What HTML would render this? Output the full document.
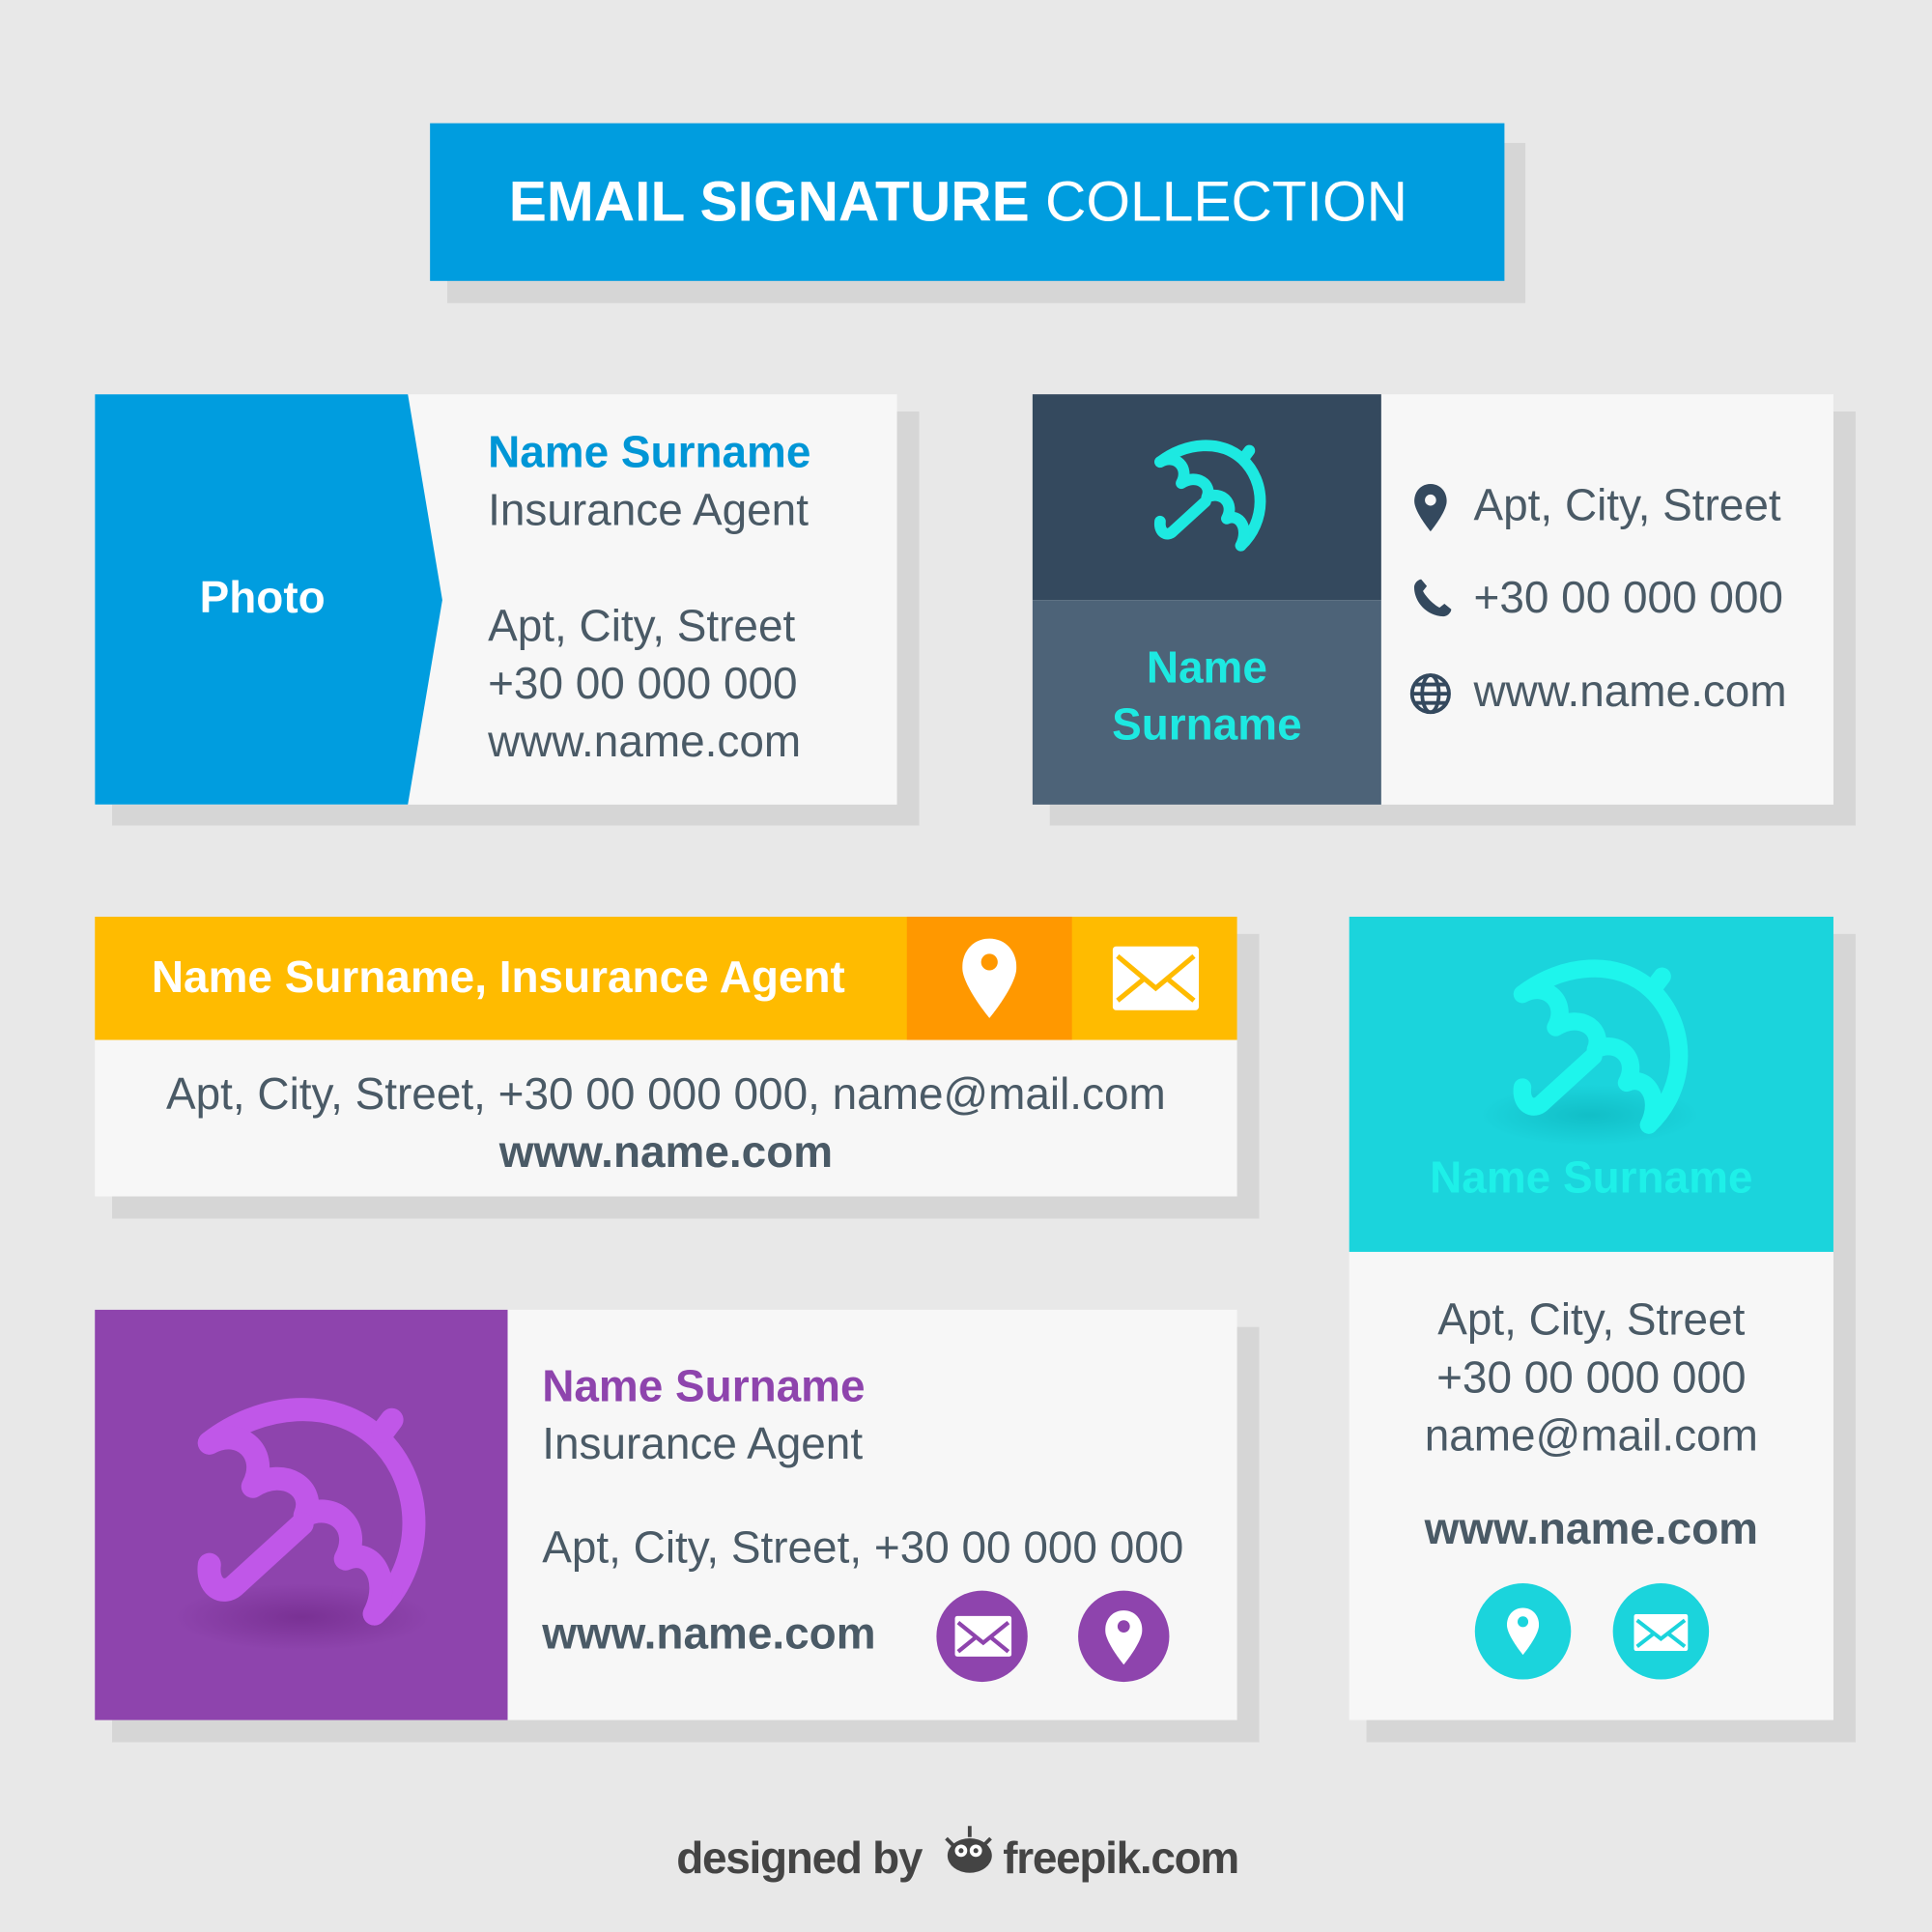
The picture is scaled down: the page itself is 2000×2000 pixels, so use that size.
<!DOCTYPE html>
<html><head><meta charset="utf-8"><style>
html,body{margin:0;padding:0;background:#e8e8e8;width:2000px;height:2000px;overflow:hidden}
#w{position:absolute;left:0;top:0;width:1568px;height:1568px;transform:scale(1.27551);transform-origin:0 0;font-family:"Liberation Sans",sans-serif;color:#4a5a66}
.a{position:absolute}
.sh{position:absolute;background:#d6d6d6}
.t{position:absolute;font-size:36px;white-space:nowrap;line-height:1}
.b{font-weight:bold}
</style></head><body><div id="w">
<svg width="0" height="0" style="position:absolute"><defs>
<symbol id="umb" viewBox="0 0 100 100"><g fill="none" stroke-width="8" stroke-linecap="round" stroke-linejoin="round">
<path d="M17,26 C35,12 60,10 75,24 C92,40 92,68 74,85"/>
<path d="M17,26 C28,20 38,30 32,41 C43,34 54,42 50,51 C60,46 70,55 64,66 C73,62 80,73 74,85"/>
<path d="M77,22 L80,18"/>
<path d="M49,54 L26,75 C22,79 16,76 17,68"/></g></symbol>
</defs></svg>

<!-- title -->
<div class="sh" style="left:363px;top:116px;width:875px;height:130px"></div>
<div class="a" style="left:349px;top:100px;width:872px;height:128px;background:#009ddf"></div>
<div class="t" style="left:413px;top:140px;font-size:46px;color:#fff"><b>EMAIL SIGNATURE</b> COLLECTION</div>

<!-- card1 -->
<div class="sh" style="left:91px;top:334px;width:655px;height:336px"></div>
<div class="a" style="left:77px;top:320px;width:651px;height:333px;background:#f7f7f7"></div>
<svg class="a" style="left:77px;top:320px" width="290" height="333"><polygon points="0,0 254,0 282,167 254,333 0,333" fill="#009ddf"/></svg>
<div class="t b" style="left:77px;top:467px;width:272px;text-align:center;color:#fff">Photo</div>
<div class="t b" style="left:396px;top:349px;color:#0096d6">Name Surname</div>
<div class="t" style="left:396px;top:396px">Insurance Agent</div>
<div class="t" style="left:396px;top:490px">Apt, City, Street</div>
<div class="t" style="left:396px;top:537px">+30 00 000 000</div>
<div class="t" style="left:396px;top:584px">www.name.com</div>

<!-- card2 -->
<div class="sh" style="left:852px;top:334px;width:654px;height:336px"></div>
<div class="a" style="left:838px;top:320px;width:650px;height:333px;background:#f7f7f7"></div>
<div class="a" style="left:838px;top:320px;width:283px;height:167px;background:#34495e"></div>
<div class="a" style="left:838px;top:487px;width:283px;height:166px;background:#4d6378"></div>
<svg class="a" style="left:922px;top:345px" width="115" height="115" stroke="#1de9e1"><use href="#umb"/></svg>
<div class="t b" style="left:838px;top:524px;width:283px;text-align:center;color:#1de9e1">Name</div>
<div class="t b" style="left:838px;top:570px;width:283px;text-align:center;color:#1de9e1">Surname</div>
<svg class="a" style="left:1147px;top:392px" width="28" height="40" viewBox="4 1 16 22"><path fill="#34495e" d="M12,1 C7.5,1 4.5,4.5 4.5,9 C4.5,14 12,23 12,23 C12,23 19.5,14 19.5,9 C19.5,4.5 16.5,1 12,1Z"/><circle cx="12" cy="8.5" r="2.6" fill="#f7f7f7"/></svg>
<svg class="a" style="left:1143px;top:466px" width="38" height="40" viewBox="0 0 24 24"><path fill="#34495e" d="M6.6,2 C5,2 3,4 3,6 C3,14 10,21 18,21 C20,21 22,19 22,17.4 L18.5,14.5 L16,16.5 C13,15 9,11 7.5,8 L9.5,5.5 Z"/></svg>
<svg class="a" style="left:1143px;top:545px" width="36" height="36" viewBox="0 0 24 24" fill="none" stroke="#34495e" stroke-width="2"><circle cx="12" cy="12" r="10"/><ellipse cx="12" cy="12" rx="4.5" ry="10"/><path d="M2,12H22M4,7H20M4,17H20"/></svg>
<div class="t" style="left:1196px;top:392px">Apt, City, Street</div>
<div class="t" style="left:1196px;top:467px">+30 00 000 000</div>
<div class="t" style="left:1196px;top:543px">www.name.com</div>

<!-- card3 -->
<div class="sh" style="left:91px;top:758px;width:931px;height:231px"></div>
<div class="a" style="left:77px;top:744px;width:927px;height:227px;background:#f7f7f7"></div>
<div class="a" style="left:77px;top:744px;width:927px;height:100px;background:#ffbb00"></div>
<div class="a" style="left:736px;top:744px;width:134px;height:100px;background:#ff9800"></div>
<div class="t b" style="left:123px;top:775px;color:#fff">Name Surname, Insurance Agent</div>
<svg class="a" style="left:781px;top:759px" width="44" height="70" viewBox="4.5 1 15 22"><path fill="#fff" d="M12,1 C7.5,1 4.5,4.5 4.5,9 C4.5,14 12,23 12,23 C12,23 19.5,14 19.5,9 C19.5,4.5 16.5,1 12,1Z"/><circle cx="12" cy="7.5" r="2.3" fill="#ff9800"/></svg>
<svg class="a" style="left:903px;top:768px" width="70" height="52" viewBox="0 0 70 52"><rect width="70" height="52" rx="3" fill="#fff"/><path d="M4,8 L35,34 L66,8 M4,44 L26,26 M66,44 L44,26" stroke="#ffbb00" stroke-width="4" fill="none"/></svg>
<div class="t" style="left:77px;top:870px;width:927px;text-align:center">Apt, City, Street, +30 00 000 000, name@mail.com</div>
<div class="t b" style="left:77px;top:917px;width:927px;text-align:center">www.name.com</div>

<!-- card4 -->
<div class="sh" style="left:1109px;top:758px;width:397px;height:656px"></div>
<div class="a" style="left:1095px;top:744px;width:393px;height:652px;background:#f7f7f7"></div>
<div class="a" style="left:1095px;top:744px;width:393px;height:272px;background:#1bd4dc"></div>
<div class="a" style="left:1200px;top:880px;width:180px;height:50px;border-radius:50%;background:radial-gradient(ellipse,rgba(0,150,160,.35),rgba(0,150,160,0) 70%)"></div>
<svg class="a" style="left:1205px;top:760px" width="180" height="180" stroke="#1ef5ec"><use href="#umb"/></svg>
<div class="t b" style="left:1095px;top:938px;width:393px;text-align:center;color:#1ef0e8">Name Surname</div>
<div class="t" style="left:1095px;top:1053px;width:393px;text-align:center">Apt, City, Street</div>
<div class="t" style="left:1095px;top:1100px;width:393px;text-align:center">+30 00 000 000</div>
<div class="t" style="left:1095px;top:1147px;width:393px;text-align:center">name@mail.com</div>
<div class="t b" style="left:1095px;top:1223px;width:393px;text-align:center">www.name.com</div>
<div class="a" style="left:1197px;top:1285px;width:78px;height:78px;border-radius:50%;background:#1bd4dc"></div>
<div class="a" style="left:1309px;top:1285px;width:78px;height:78px;border-radius:50%;background:#1bd4dc"></div>
<svg class="a" style="left:1223px;top:1304px" width="26" height="40" viewBox="4.5 1 15 22"><path fill="#fff" d="M12,1 C7.5,1 4.5,4.5 4.5,9 C4.5,14 12,23 12,23 C12,23 19.5,14 19.5,9 C19.5,4.5 16.5,1 12,1Z"/><circle cx="12" cy="7.5" r="2.5" fill="#1bd4dc"/></svg>
<svg class="a" style="left:1326px;top:1310px" width="44" height="30" viewBox="0 0 70 48"><rect width="70" height="48" rx="3" fill="#fff"/><path d="M4,8 L35,32 L66,8 M4,42 L26,25 M66,42 L44,25" stroke="#1bd4dc" stroke-width="5" fill="none"/></svg>

<!-- card5 -->
<div class="sh" style="left:91px;top:1077px;width:931px;height:337px"></div>
<div class="a" style="left:77px;top:1063px;width:927px;height:333px;background:#f7f7f7"></div>
<div class="a" style="left:77px;top:1063px;width:335px;height:333px;background:#8e44ad"></div>
<div class="a" style="left:140px;top:1285px;width:210px;height:55px;border-radius:50%;background:radial-gradient(ellipse,rgba(90,20,110,.4),rgba(90,20,110,0) 70%)"></div>
<svg class="a" style="left:130px;top:1110px" width="235" height="235" stroke="#c057e8"><use href="#umb"/></svg>
<div class="t b" style="left:440px;top:1107px;color:#8e44ad">Name Surname</div>
<div class="t" style="left:440px;top:1154px">Insurance Agent</div>
<div class="t" style="left:440px;top:1238px">Apt, City, Street, +30 00 000 000</div>
<div class="t b" style="left:440px;top:1308px">www.name.com</div>
<div class="a" style="left:760px;top:1291px;width:74px;height:74px;border-radius:50%;background:#8e44ad"></div>
<div class="a" style="left:875px;top:1291px;width:74px;height:74px;border-radius:50%;background:#8e44ad"></div>
<svg class="a" style="left:775px;top:1311px" width="46" height="34" viewBox="0 0 70 50"><rect width="70" height="50" rx="3" fill="#fff"/><path d="M4,8 L35,33 L66,8 M4,44 L26,26 M66,44 L44,26" stroke="#8e44ad" stroke-width="5" fill="none"/></svg>
<svg class="a" style="left:897px;top:1305px" width="30" height="48" viewBox="4.5 1 15 22"><path fill="#fff" d="M12,1 C7.5,1 4.5,4.5 4.5,9 C4.5,14 12,23 12,23 C12,23 19.5,14 19.5,9 C19.5,4.5 16.5,1 12,1Z"/><circle cx="12" cy="7.5" r="2.5" fill="#8e44ad"/></svg>

<!-- footer -->
<div class="t b" style="left:549px;top:1490px;color:#444;font-size:36px;letter-spacing:-1px">designed by</div>
<svg class="a" style="left:762px;top:1480px" width="48" height="42" viewBox="0 0 48 42"><ellipse cx="25" cy="26" rx="18" ry="14" fill="#444"/><circle cx="18" cy="22" r="5" fill="#fff"/><circle cx="30" cy="22" r="5" fill="#fff"/><circle cx="18" cy="22" r="2" fill="#444"/><circle cx="30" cy="22" r="2" fill="#444"/><path d="M6,12 L12,18 M25,2 L25,11 M42,12 L37,17" stroke="#444" stroke-width="3"/></svg>
<div class="t b" style="left:814px;top:1490px;color:#444;font-size:36px;letter-spacing:-1px">freepik.com</div>
</div></body></html>
